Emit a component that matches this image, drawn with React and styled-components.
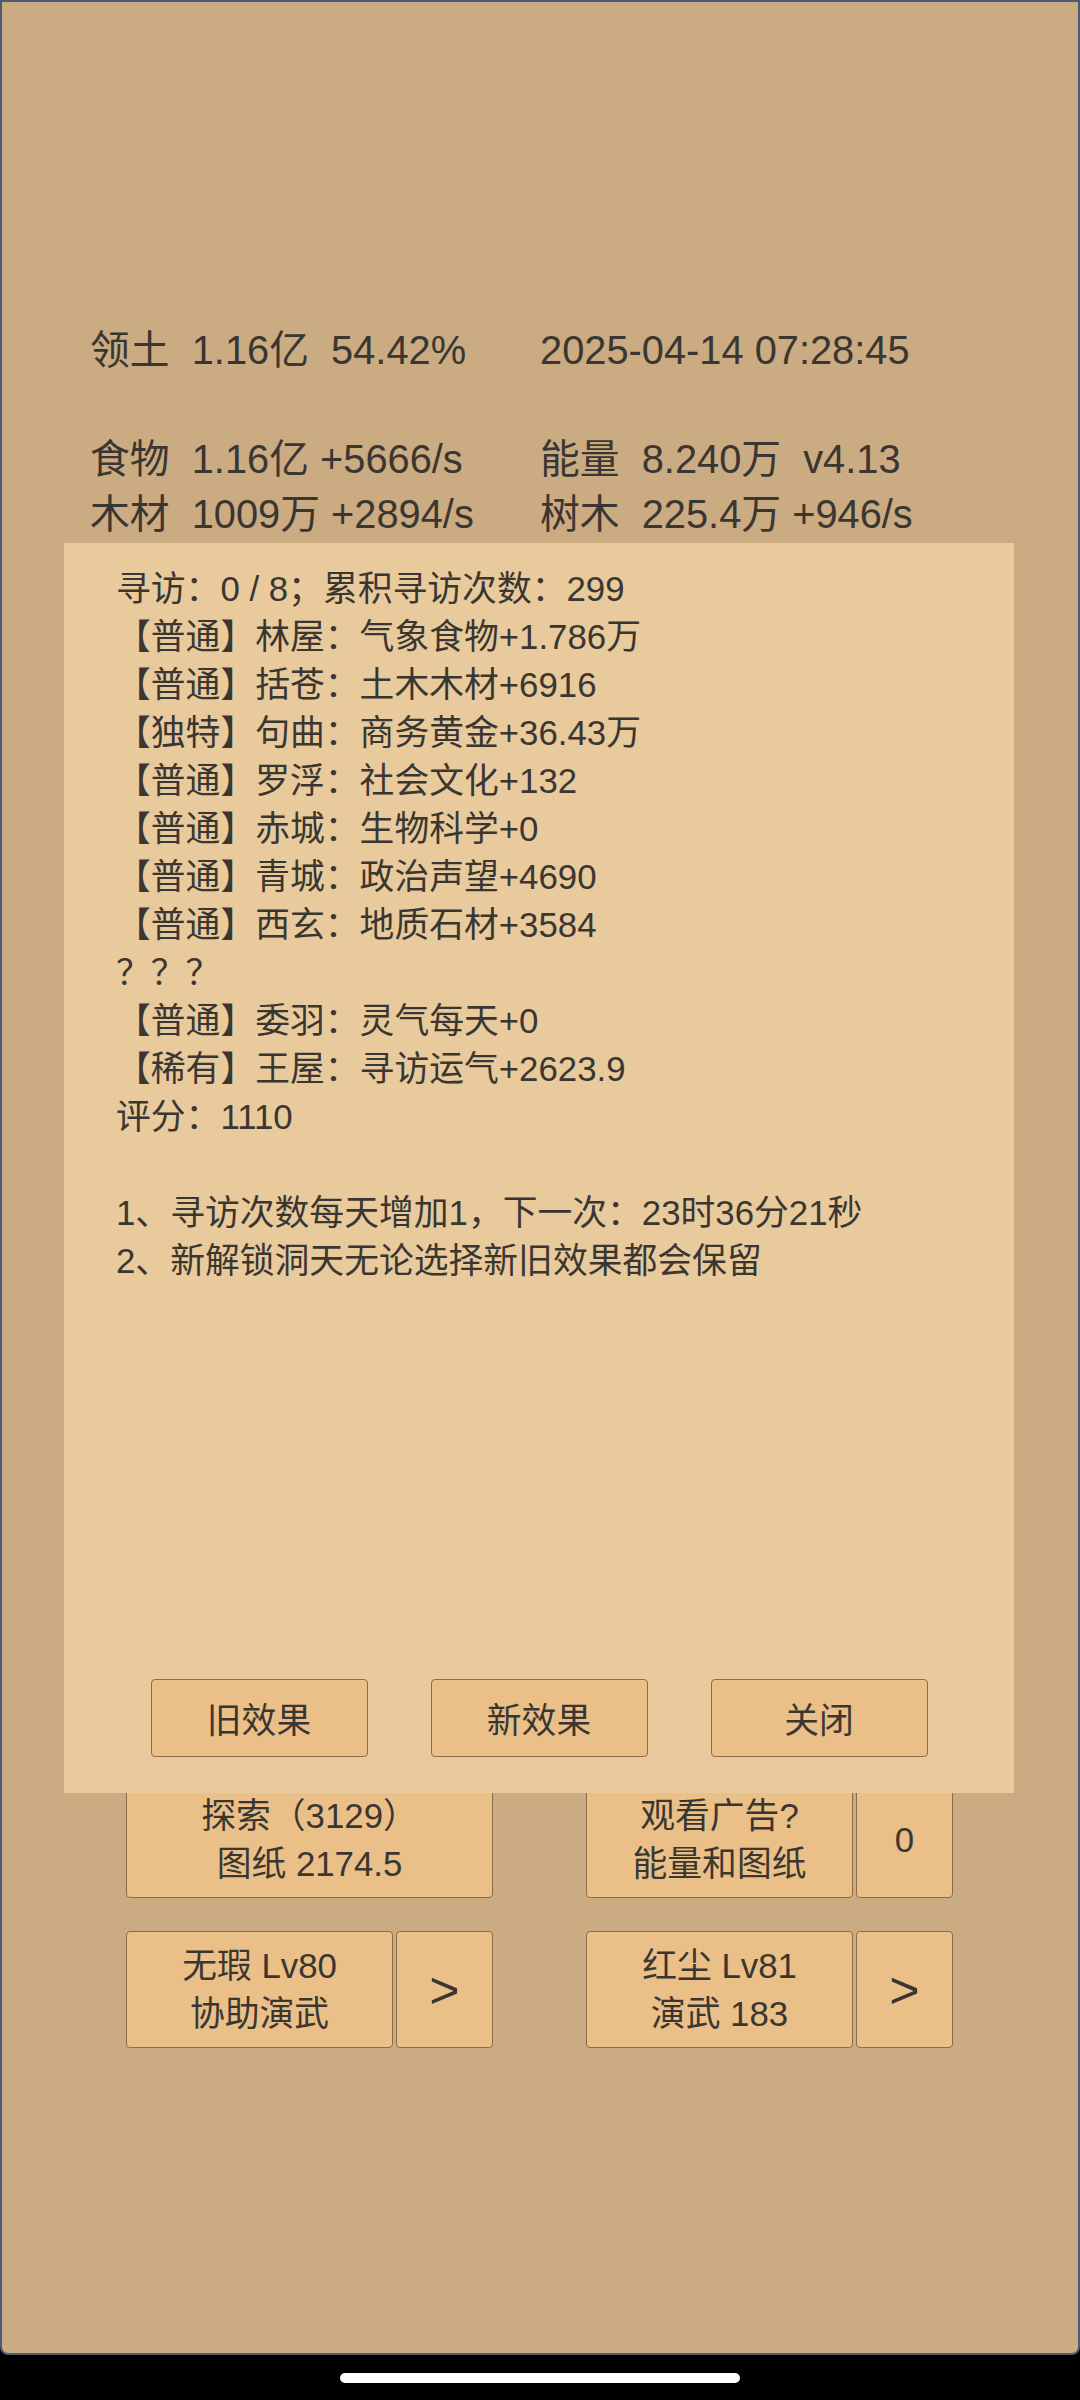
import styled, { createGlobalStyle } from 'styled-components';

const GlobalStyle = createGlobalStyle`
  html, body {
    margin: 0;
    padding: 0;
    background: #000;
  }
  body {
    font-family: "Liberation Sans", "Noto Sans CJK SC", sans-serif;
    color: #3a3632;
  }
`;

const Screen = styled.div`
  width: 1080px;
  height: 2400px;
  background: #000;
  display: flex;
  flex-direction: column;
`;

const Frame = styled.div`
  position: relative;
  box-sizing: border-box;
  height: 2355px;
  background: #cbab82;
  border: 2px solid #4f5b72;
  border-radius: 0 0 8px 8px;
  padding-top: 321px;
  overflow: hidden;
`;

const Stats = styled.div`
  display: grid;
  grid-template-columns: 450px 450px;
  grid-auto-rows: 54.5px;
  padding-left: 88px;
  font-size: 39.8px;
  line-height: 54.5px;
  white-space: pre;
`;

const Spacer = styled.div`
  grid-column: 1 / span 2;
`;

const ActionGrid = styled.div`
  display: grid;
  grid-template-columns: 367px 367px;
  grid-auto-rows: 117px;
  column-gap: 93px;
  row-gap: 33px;
  margin-top: 1240px;
  padding-left: 124px;
`;

const Group = styled.div`
  display: flex;
  gap: 3px;
`;

const GameButton = styled.div`
  box-sizing: border-box;
  display: flex;
  flex-direction: column;
  align-items: center;
  justify-content: center;
  width: ${(p) => (p.wide ? '100%' : p.side ? 'auto' : '267px')};
  flex: ${(p) => (p.side ? 1 : 'none')};
  height: 100%;
  background: #ebc088;
  border: 1px solid #8c6c47;
  border-radius: 4px;
  font-size: ${(p) => (p.big ? '52px' : '34.8px')};
  line-height: 48px;
  white-space: pre;
`;

const Dialog = styled.div`
  position: absolute;
  left: 62px;
  top: 541px;
  width: 950px;
  height: 1250px;
  box-sizing: border-box;
  background: #e9ca9c;
  padding: 22px 0 36px 52px;
  display: flex;
  flex-direction: column;
`;

const DialogText = styled.div`
  font-size: 34.8px;
  line-height: 48px;
  white-space: pre;
`;

const DialogActions = styled.div`
  margin-top: auto;
  margin-left: -52px;
  display: flex;
  justify-content: center;
  gap: 63px;
`;

const DialogButton = styled.div`
  box-sizing: border-box;
  width: 217px;
  height: 78px;
  display: flex;
  align-items: center;
  justify-content: center;
  background: #ebc088;
  border: 1px solid #8c6c47;
  border-radius: 4px;
  font-size: 34.8px;
`;

const HomeBar = styled.div`
  align-self: center;
  margin-top: 18px;
  width: 400px;
  height: 10px;
  border-radius: 5px;
  background: #fff;
`;

const lines = [
  '寻访：0 / 8；累积寻访次数：299',
  '【普通】林屋：气象食物+1.786万',
  '【普通】括苍：土木木材+6916',
  '【独特】句曲：商务黄金+36.43万',
  '【普通】罗浮：社会文化+132',
  '【普通】赤城：生物科学+0',
  '【普通】青城：政治声望+4690',
  '【普通】西玄：地质石材+3584',
  '？？？',
  '【普通】委羽：灵气每天+0',
  '【稀有】王屋：寻访运气+2623.9',
  '评分：1110',
  ' ',
  '1、寻访次数每天增加1，下一次：23时36分21秒',
  '2、新解锁洞天无论选择新旧效果都会保留',
];

export default function App() {
  return (
    <Screen>
      <GlobalStyle />
      <Frame>
        <Stats>
          <div>领土  1.16亿  54.42%</div>
          <div>2025-04-14 07:28:45</div>
          <Spacer />
          <div>食物  1.16亿 +5666/s</div>
          <div>能量  8.240万  v4.13</div>
          <div>木材  1009万 +2894/s</div>
          <div>树木  225.4万 +946/s</div>
        </Stats>

        <ActionGrid>
          <Group>
            <GameButton wide>
              <div>探索（3129）</div>
              <div>图纸 2174.5</div>
            </GameButton>
          </Group>
          <Group>
            <GameButton>
              <div>观看广告?</div>
              <div>能量和图纸</div>
            </GameButton>
            <GameButton side>0</GameButton>
          </Group>
          <Group>
            <GameButton>
              <div>无瑕 Lv80</div>
              <div>协助演武</div>
            </GameButton>
            <GameButton side big>&gt;</GameButton>
          </Group>
          <Group>
            <GameButton>
              <div>红尘 Lv81</div>
              <div>演武 183</div>
            </GameButton>
            <GameButton side big>&gt;</GameButton>
          </Group>
        </ActionGrid>

        <Dialog>
          <DialogText>
            {lines.map((l, i) => (
              <div key={i}>{l}</div>
            ))}
          </DialogText>
          <DialogActions>
            <DialogButton>旧效果</DialogButton>
            <DialogButton>新效果</DialogButton>
            <DialogButton>关闭</DialogButton>
          </DialogActions>
        </Dialog>
      </Frame>
      <HomeBar />
    </Screen>
  );
}
